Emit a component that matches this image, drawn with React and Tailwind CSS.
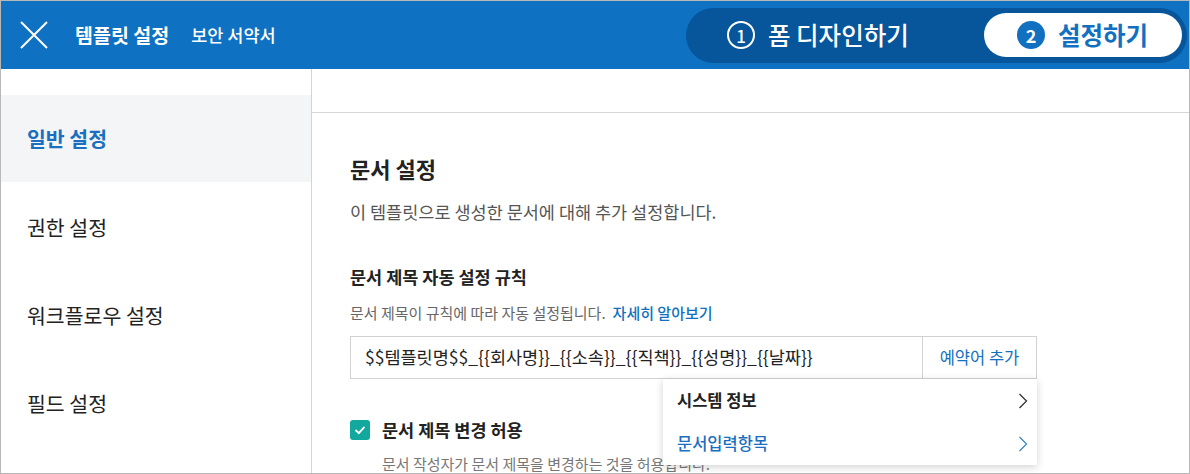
import React from 'react'

const menus = [
    { label: '일반 설정', active: true },
    { label: '권한 설정' },
    { label: '워크플로우 설정' },
    { label: '필드 설정' },
]

function Chevron({ className }) {
    return (
        <svg width="10" height="16" viewBox="0 0 10 16" className={className}>
            <polyline points="1.5,1 8.5,8 1.5,15" fill="none" stroke="currentColor" strokeWidth="1.3" />
        </svg>
    )
}

export default function App() {
    return (
        <div className="w-[1190px] h-[474px] overflow-hidden border border-[#b8b8b8] flex flex-col bg-white font-['Noto_Sans_CJK_KR','Noto_Sans',sans-serif]">
            {/* Header */}
            <header className="h-[68px] shrink-0 bg-[#0f71c2] flex items-center pr-[2px] text-white">
                <button className="ml-[19px] w-[28px] h-[28px] flex items-center justify-center">
                    <svg width="28" height="28" viewBox="0 0 28 28">
                        <path d="M1 1 L27 27 M27 1 L1 27" stroke="white" strokeWidth="2" fill="none" />
                    </svg>
                </button>
                <h1 className="ml-[27px] text-[19.5px] font-bold leading-none">템플릿 설정</h1>
                <span className="ml-[22px] text-[17.5px] font-medium leading-none">보안 서약서</span>

                {/* Stepper */}
                <div className="ml-auto h-[55px] w-[501px] rounded-full bg-[#07569b] flex items-center pl-[41px] pr-[5px]">
                    <div className="flex items-center gap-[13px]">
                        <span className="w-[28px] h-[28px] rounded-full border-2 border-white flex items-center justify-center text-[17px] font-medium leading-none">1</span>
                        <span className="text-[24.5px] font-medium leading-none">폼 디자인하기</span>
                    </div>
                    <div className="ml-auto h-[44px] w-[198px] rounded-full bg-white flex items-center pl-[33px] gap-[13px]">
                        <span className="w-[28px] h-[28px] rounded-full bg-[#1270c0] flex items-center justify-center text-[18px] font-bold leading-none text-white">2</span>
                        <span className="text-[24.5px] font-bold leading-none text-[#1270c0]">설정하기</span>
                    </div>
                </div>
            </header>

            <div className="flex flex-1 min-h-0">
                {/* Sidebar */}
                <aside className="w-[311px] shrink-0 border-r border-[#d4d4d4] pt-[26px]">
                    {menus.map((m) => (
                        <div
                            key={m.label}
                            className={
                                m.active
                                    ? 'h-[87px] mb-[1px] flex items-center pl-[26px] bg-[#f4f5f7] text-[20.5px] font-bold text-[#1a6fc0]'
                                    : 'h-[88px] flex items-center pl-[26px] text-[20.5px] text-[#222]'
                            }
                        >
                            {m.label}
                        </div>
                    ))}
                </aside>

                {/* Main */}
                <main className="flex-1 min-w-0">
                    <div className="h-[44px] border-b border-[#d6d6d6]"></div>
                    <div className="pl-[38px] pt-[41px]">
                        <h2 className="text-[22px] leading-[28px] font-bold text-[#222]">문서 설정</h2>
                        <p className="mt-[18px] text-[17.5px] leading-[24px] text-[#555]">이 템플릿으로 생성한 문서에 대해 추가 설정합니다.</p>

                        <h3 className="mt-[41px] text-[17.5px] leading-[24px] font-bold text-[#222]">문서 제목 자동 설정 규칙</h3>
                        <p className="mt-[14px] text-[15px] leading-[20px] text-[#666]">
                            문서 제목이 규칙에 따라 자동 설정됩니다.
                            <a className="ml-[7px] font-medium text-[#1170c0]">자세히 알아보기</a>
                        </p>

                        <div className="relative mt-[13px] w-[687px]">
                            <div className="h-[43px] border border-[#d2d2d2] flex">
                                <div className="flex-1 flex items-center pl-[14px] text-[17.5px] text-[#222]">
                                    $$템플릿명$$_{'{{'}회사명{'}}'}_{'{{'}소속{'}}'}_{'{{'}직책{'}}'}_{'{{'}성명{'}}'}_{'{{'}날짜{'}}'}
                                </div>
                                <button className="w-[114px] border-l border-[#d2d2d2] flex items-center justify-center text-[16.5px] text-[#1170c0]">
                                    예약어 추가
                                </button>
                            </div>

                            {/* Dropdown */}
                            <div className="absolute right-0 top-[43px] w-[374px] bg-white shadow-[0_2px_8px_rgba(0,0,0,0.18)] z-10">
                                <div className="h-[43px] flex items-center justify-between pl-[14px] pr-[9px] text-[16.5px] font-bold text-[#222]">
                                    시스템 정보
                                    <Chevron className="text-[#333]" />
                                </div>
                                <div className="h-[43px] flex items-center justify-between pl-[14px] pr-[9px] text-[16.5px] font-medium text-[#1a6fc0]">
                                    문서입력항목
                                    <Chevron className="text-[#3b86cc]" />
                                </div>
                            </div>
                        </div>

                        <div className="mt-[39px] h-[24px] flex items-center">
                            <span className="w-[20px] h-[20px] rounded-[3px] bg-[#13a89e] flex items-center justify-center">
                                <svg width="14" height="14" viewBox="0 0 14 14">
                                    <polyline points="2.5,7 5.8,10.2 11.5,3.8" fill="none" stroke="white" strokeWidth="1.8" />
                                </svg>
                            </span>
                            <span className="ml-[12px] text-[17.5px] leading-[24px] font-bold text-[#222]">문서 제목 변경 허용</span>
                        </div>
                        <p className="mt-[12px] ml-[32px] text-[15px] leading-[20px] text-[#777]">문서 작성자가 문서 제목을 변경하는 것을 허용합니다.</p>
                    </div>
                </main>
            </div>
        </div>
    )
}
